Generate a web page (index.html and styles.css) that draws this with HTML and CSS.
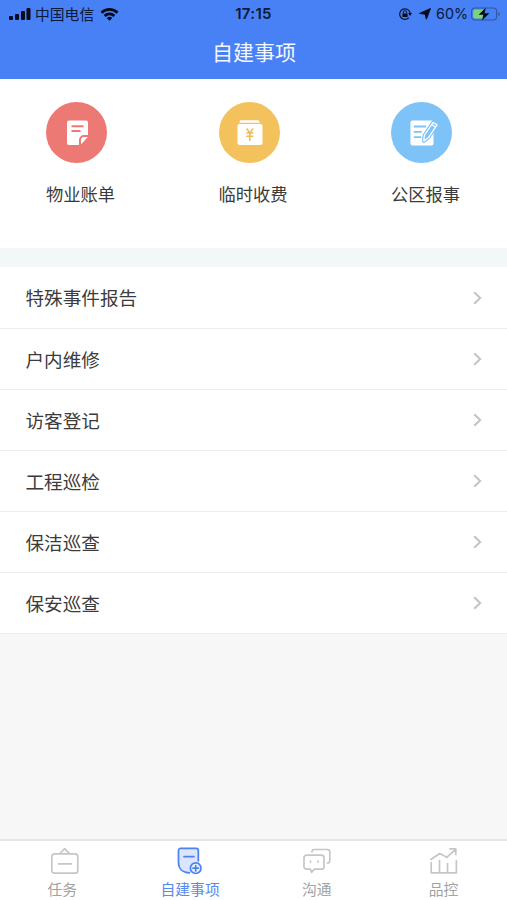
FILE: index.html
```html
<!DOCTYPE html>
<html lang="zh-CN">
<head>
<meta charset="utf-8">
<meta name="viewport" content="width=device-width, initial-scale=1">
<title>自建事项</title>
<link rel="stylesheet" href="styles.css">
</head>
<body>
<header class="header">
  <div class="status">
    <div class="status-left">
      <svg class="signal" width="23" height="14" viewBox="0 0 23 14"><rect x="0" y="9" width="4" height="4" rx="1"/><rect x="6" y="7" width="4" height="6" rx="1"/><rect x="12" y="4" width="4" height="9" rx="1"/><rect x="17.5" y="1" width="4" height="12" rx="1"/></svg>
      <span class="carrier">中国电信</span>
      <svg class="wifi" width="19" height="14" viewBox="0 0 19 14"><path d="M.6 4.7a12.8 12.8 0 0 1 17.8 0l-1.9 2a10 10 0 0 0-14 0zM3.7 7.9a8.3 8.3 0 0 1 11.6 0l-1.9 2a5.6 5.6 0 0 0-7.8 0zM6.7 11a4 4 0 0 1 5.6 0l-2.8 2.8z"/></svg>
    </div>
    <span class="clock">17:15</span>
    <div class="status-right">
      <svg class="lock" width="14" height="14" viewBox="0 0 14 14"><path d="M10.8 10.8A5.3 5.3 0 1 1 12.2 6.2" fill="none" stroke="#0b1838" stroke-width="1.3"/><path d="M10 6h4l-2 3zM4.4 6.4h5.2v3.7H4.4z"/><path d="M5.4 6.5V5.3a1.6 1.6 0 0 1 3.2 0v1.2" fill="none" stroke="#0b1838" stroke-width="1.1"/></svg>
      <svg class="arrow" width="12" height="12" viewBox="0 0 12 12"><path d="M11.4.6 7.4 11.2 6.2 6.2.6 5.4z" stroke="#050b1c" stroke-width="1" stroke-linejoin="round"/></svg>
      <span class="percent">60%</span>
      <svg class="battery" width="30" height="14" viewBox="0 0 30 14"><rect x=".6" y="1" width="25" height="12" rx="3.2" fill="none" stroke="#3156a5" stroke-width="1.1"/><path d="M4 2.6h9.5v8.8H4A1.8 1.8 0 0 1 2.2 9.6V4.4A1.8 1.8 0 0 1 4 2.6z" fill="#78d579"/><path d="M27.3 5c2 .6 2 3.4 0 4z" fill="#3156a5"/><path d="M14.7.7 7.6 7.8h4.7l-1.3 5.7 7.4-7.3h-4.8z"/></svg>
    </div>
  </div>
  <h1 class="title">自建事项</h1>
</header>

<section class="shortcuts">
  <div class="shortcut">
    <div class="disc red">
      <svg width="61" height="61" viewBox="0 0 61 61"><path d="M23 18.5H40a2 2 0 0 1 2 2V33h-4a5 5 0 0 0-5 5v5H23a2 2 0 0 1-2-2V20.5a2 2 0 0 1 2-2z" fill="#fff"/><path d="M25.5 24.3H37.5M25.5 29H34.5" stroke="#ed7974" stroke-width="2"/><path d="M35 42.5V38a3 3 0 0 1 3-3h3.8z" fill="#fff"/></svg>
    </div>
    <span class="shortcut-label">物业账单</span>
  </div>
  <div class="shortcut">
    <div class="disc yellow">
      <svg width="61" height="61" viewBox="0 0 61 61"><path d="M21.5 18.3h18l1.5 2.4H20z" fill="#fff"/><rect x="18.5" y="22" width="25" height="21" rx="2" fill="#fff"/><path d="m27.5 26.5 3.3 4.5 3.3-4.5M27.3 31h7M27.3 34.3h7M30.8 31v8" fill="none" stroke="#f0ba57" stroke-width="1.5"/></svg>
    </div>
    <span class="shortcut-label">临时收费</span>
  </div>
  <div class="shortcut">
    <div class="disc blue">
      <svg width="61" height="61" viewBox="0 0 61 61"><rect x="19.5" y="18.5" width="23" height="25" rx="2" fill="#fff"/><path d="M22.8 24.5H35M22.8 29.8h8M22.8 35.2h7.5" stroke="#7dc3f8" stroke-width="1.8"/><path d="m42 20.5 4 2.3-8.7 13-4.5 3.2.5-5.5z" fill="#fff" stroke="#7dc3f8" stroke-width="3.6" stroke-linejoin="round"/><path d="m42 20.5 4 2.3-8.7 13-4.5 3.2.5-5.5z" fill="#7dc3f8" stroke="#fff" stroke-width="1.3" stroke-linejoin="round"/><path d="m40.5 22.5 4 2.5" stroke="#fff" stroke-width="1.3"/></svg>
    </div>
    <span class="shortcut-label">公区报事</span>
  </div>
</section>

<main class="list">
  <div class="row"><span>特殊事件报告</span><svg class="chevron" width="9" height="14" viewBox="0 0 9 14"><path d="m1.2 1.2 6 5.8-6 5.8"/></svg></div>
  <div class="row"><span>户内维修</span><svg class="chevron" width="9" height="14" viewBox="0 0 9 14"><path d="m1.2 1.2 6 5.8-6 5.8"/></svg></div>
  <div class="row"><span>访客登记</span><svg class="chevron" width="9" height="14" viewBox="0 0 9 14"><path d="m1.2 1.2 6 5.8-6 5.8"/></svg></div>
  <div class="row"><span>工程巡检</span><svg class="chevron" width="9" height="14" viewBox="0 0 9 14"><path d="m1.2 1.2 6 5.8-6 5.8"/></svg></div>
  <div class="row"><span>保洁巡查</span><svg class="chevron" width="9" height="14" viewBox="0 0 9 14"><path d="m1.2 1.2 6 5.8-6 5.8"/></svg></div>
  <div class="row"><span>保安巡查</span><svg class="chevron" width="9" height="14" viewBox="0 0 9 14"><path d="m1.2 1.2 6 5.8-6 5.8"/></svg></div>
</main>

<nav class="tabs">
  <div class="tab tab-first">
    <svg class="tab-icon" width="30" height="28" viewBox="0 0 30 28"><rect x="2.8" y="6.8" width="26" height="19.4" rx="2.8"/><path d="m11 6.5 4.7-4.8 4.7 4.8M9.5 16.8h13"/></svg>
    <span>任务</span>
  </div>
  <div class="tab active">
    <svg class="tab-icon" width="30" height="28" viewBox="0 0 30 28"><path d="M4.7 1.4h17.6a2 2 0 0 1 2 2v18l-9 4.4c-6 0-12.6-3.5-12.6-10.5V3.4a2 2 0 0 1 2-2z" fill="#dbe6fc" stroke="none"/><path d="M23.3 13.8V3.4a2 2 0 0 0-2-2H5.5a2 2 0 0 0-2 2v12c0 6 4 10.2 11 10.4M9 9.7h10"/><circle cx="20.7" cy="21.2" r="5.3" fill="#e9f0fe"/><path d="M18 21.2h5.4M20.7 18.5v5.4"/></svg>
    <span>自建事项</span>
  </div>
  <div class="tab">
    <svg class="tab-icon" width="30" height="28" viewBox="0 0 30 28"><path d="M4.5 8.2h15a2.5 2.5 0 0 1 2.5 2.5v9a2.5 2.5 0 0 1-2.5 2.5h-7L9.5 25.3l-1-3.1h-4A2.5 2.5 0 0 1 2 19.7v-9a2.5 2.5 0 0 1 2.5-2.5zM10 4.8c0-1.5.8-2.3 2.3-2.3h13c1.5 0 2.5 1 2.5 2.5v8.5c0 1.5-.8 2.5-2.5 2.5"/><path d="M8.5 14.2v.9M16 14.2v.9"/></svg>
    <span>沟通</span>
  </div>
  <div class="tab">
    <svg class="tab-icon" width="30" height="28" viewBox="0 0 30 28"><path d="M2.2 15.5v10.3h25.2V13.5M10.5 13.5v12M18.5 16.5v9"/><path d="m1.8 12.5 9-6 7 3.8 8.8-8M21 1.9h5.8v5.6"/></svg>
    <span>品控</span>
  </div>
</nav>
</body>
</html>
```

FILE: styles.css
```css
* { box-sizing: border-box; }

body {
  margin: 0;
  height: 900px;
  display: flex;
  flex-direction: column;
  overflow: hidden;
  background: #f7f7f7;
  color: #3b3b3b;
  font-family: "Noto Sans CJK SC", sans-serif;
}

svg { display: block; flex: none; }

.header {
  height: 79px;
  flex: none;
  background: #4881f6;
}

.status {
  height: 27px;
  padding: 0 6px 0 9px;
  display: grid;
  grid-template-columns: 1fr auto 1fr;
  align-items: center;
  color: #0b1838;
  fill: #050b1c;
  font-size: 14.8px;
  line-height: 27px;
}

.status-left,
.status-right { display: flex; align-items: center; }

.status-right { justify-content: flex-end; }
.carrier { margin-left: 3px; }
.wifi { margin-left: 6px; }

.clock {
  margin-right: 3px;
  font-family: Inter, sans-serif;
  font-size: 15px;
  font-weight: 600;
  letter-spacing: 0.3px;
}

.arrow { margin: 0 5px 0 7px; }

.percent {
  font-family: Inter, sans-serif;
  font-size: 14.3px;
  margin-right: 3px;
}

.title {
  margin: 0;
  padding-left: 1px;
  text-align: center;
  color: #f3f7ff;
  font-size: 21px;
  font-weight: 400;
  line-height: 48px;
}

.shortcuts {
  height: 169px;
  flex: none;
  display: flex;
  justify-content: space-between;
  padding: 23px 46px 0;
  background: #fff;
}

.shortcut { width: 70px; }

.disc {
  width: 61px;
  height: 61px;
  border-radius: 50%;
}

.red { background: #ed7974; }
.yellow { background: #f3c25d; }
.blue { background: #7dc3f8; }

.shortcut-label {
  display: block;
  margin-top: 18px;
  font-size: 17.3px;
  line-height: 26px;
  white-space: nowrap;
}

.list {
  flex: none;
  border-top: 19px solid #f4f7f7;
}

.row {
  height: 61px;
  padding: 0 25px 0 25.5px;
  display: flex;
  align-items: center;
  justify-content: space-between;
  background: #fff;
  border-bottom: 1px solid #ececec;
  font-size: 18.6px;
}

.row:first-child { height: 62px; }
.row span { padding-bottom: 2px; }

.chevron {
  fill: none;
  stroke: #c3c3c3;
  stroke-width: 2;
}

.tabs {
  height: 61px;
  margin-top: auto;
  flex: none;
  display: grid;
  grid-template-columns: repeat(4, 1fr);
  border-top: 2px solid #e6e6e6;
  background: #fff;
}

.tab {
  display: flex;
  flex-direction: column;
  align-items: center;
  padding-top: 6px;
  color: #a2a2a2;
  font-size: 14.8px;
  line-height: 28px;
}

.tab-first { padding-right: 2px; }
.tab-first .tab-icon { margin-left: 3px; }

.tab-icon {
  fill: none;
  stroke: #c6c6c6;
  stroke-width: 1.7;
  stroke-linecap: round;
  stroke-linejoin: round;
}

.active { color: #5989ef; }
.active .tab-icon { stroke: #4d82f0; }
```
